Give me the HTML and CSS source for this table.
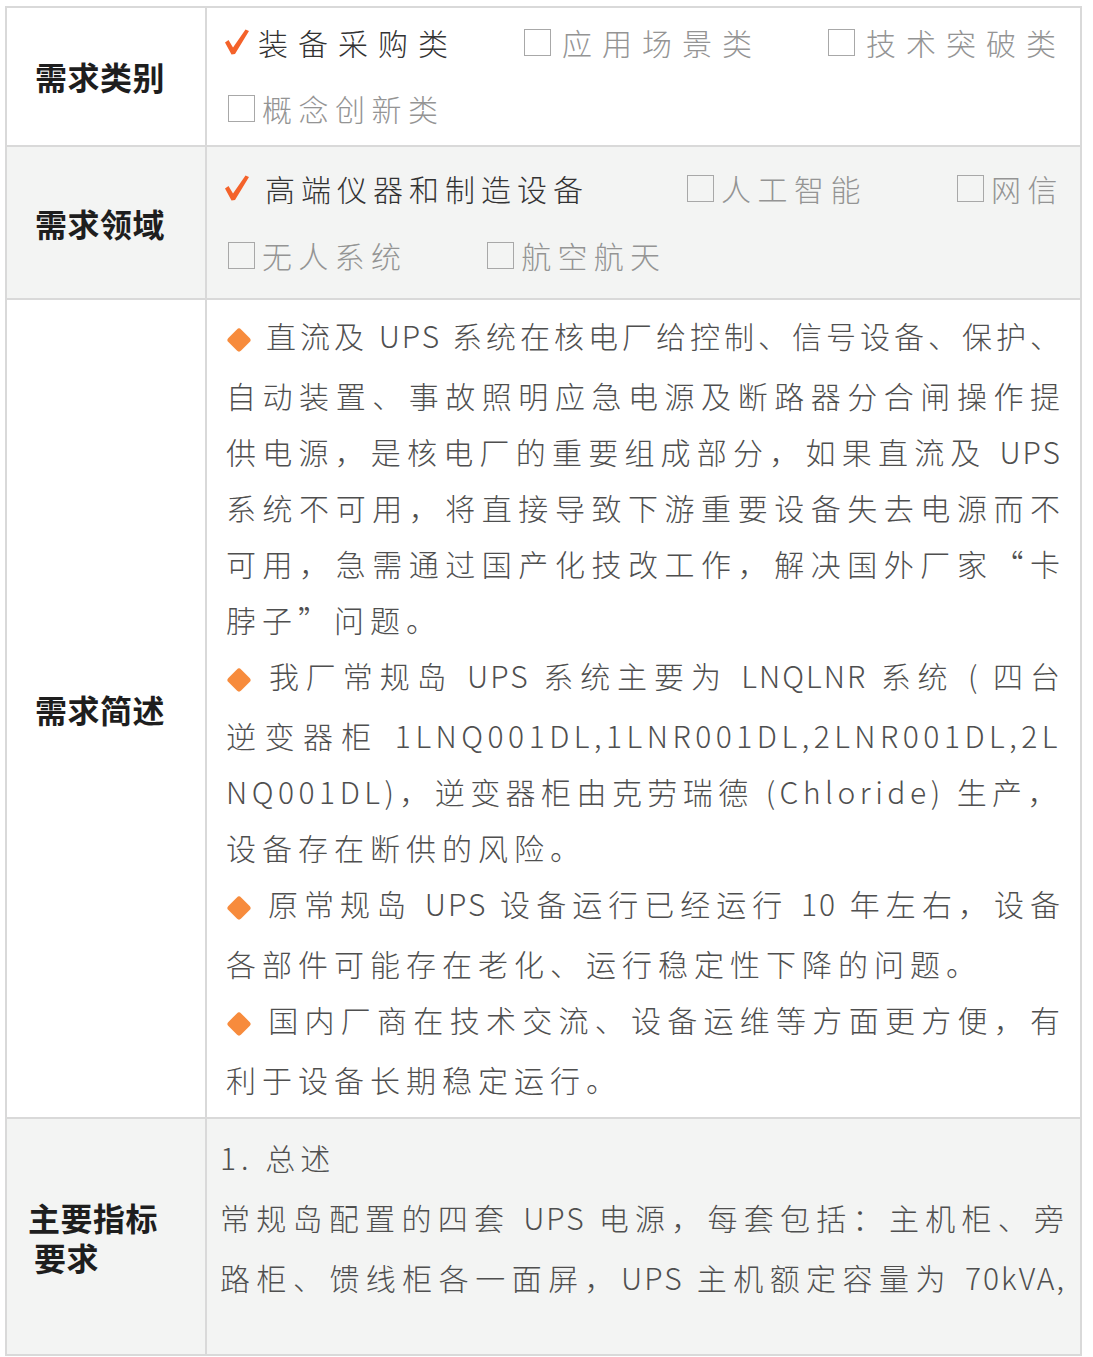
FILE: index.html
```html
<!doctype html>
<html lang="zh-CN">
    <head>
        <meta charset="UTF-8" />
        <meta name="viewport" content="width=device-width, initial-scale=1.0" />
        <title>需求信息</title>
        <link rel="stylesheet" href="styles.css">
    </head>
    <body>
        <table class="req">
            <colgroup>
                <col class="col-label" />
                <col />
            </colgroup>
            <tr>
                <th class="label-top">需求类别</th>
                <td class="opts opts-type">
                    <div class="line line-wide">
                        <span class="opt on">
                            <svg class="check" viewBox="0 0 24 26"><path d="M0 13.5 L3.5 11 L8 18.5 L20.5 0.5 L24 2 L10 25 L6.5 25.5 Z" /></svg>装备采购类
                        </span>
                        <span class="opt"><i class="box"></i>应用场景类</span>
                        <span class="opt"><i class="box"></i>技术突破类</span>
                    </div>
                    <div class="line">
                        <span class="opt"><i class="box"></i>概念创新类</span>
                    </div>
                </td>
            </tr>
            <tr class="shade">
                <th>需求领域</th>
                <td class="opts opts-field">
                    <div class="line line-a">
                        <span class="opt on">
                            <svg class="check" viewBox="0 0 24 26"><path d="M0 13.5 L3.5 11 L8 18.5 L20.5 0.5 L24 2 L10 25 L6.5 25.5 Z" /></svg>高端仪器和制造设备
                        </span>
                        <span class="opt"><i class="box"></i>人工智能</span>
                        <span class="opt"><i class="box"></i>网信</span>
                    </div>
                    <div class="line line-b">
                        <span class="opt"><i class="box"></i>无人系统</span>
                        <span class="opt"><i class="box"></i>航空航天</span>
                    </div>
                </td>
            </tr>
            <tr>
                <th>需求简述</th>
                <td class="text">
                    <p>
                        <span class="ln lead"><i class="dot"></i>直流及 UPS 系统在核电厂给控制、信号设备、保护、</span>
                        <span class="ln">自动装置、事故照明应急电源及断路器分合闸操作提</span>
                        <span class="ln">供电源，是核电厂的重要组成部分，如果直流及 UPS</span>
                        <span class="ln">系统不可用，将直接导致下游重要设备失去电源而不</span>
                        <span class="ln">可用，急需通过国产化技改工作，解决国外厂家“卡</span>
                        <span class="ln end">脖子”问题。</span>
                    </p>
                    <p>
                        <span class="ln lead"><i class="dot"></i>我厂常规岛 UPS 系统主要为 LNQLNR 系统 ( 四台</span>
                        <span class="ln code">逆变器柜 1LNQ001DL,1LNR001DL,2LNR001DL,2L</span>
                        <span class="ln code">NQ001DL)，逆变器柜由克劳瑞德 (Chloride) 生产，</span>
                        <span class="ln end">设备存在断供的风险。</span>
                    </p>
                    <p>
                        <span class="ln lead"><i class="dot"></i>原常规岛 UPS 设备运行已经运行 10 年左右，设备</span>
                        <span class="ln end">各部件可能存在老化、运行稳定性下降的问题。</span>
                    </p>
                    <p>
                        <span class="ln lead"><i class="dot"></i>国内厂商在技术交流、设备运维等方面更方便，有</span>
                        <span class="ln end">利于设备长期稳定运行。</span>
                    </p>
                </td>
            </tr>
            <tr class="shade">
                <th class="label-two">
                    <span class="lbl">主要指标</span>
                    <span class="lbl indent">要求</span>
                </th>
                <td class="text text-spec">
                    <p><span class="ln end">1. 总述</span></p>
                    <p>
                        <span class="ln">常规岛配置的四套 UPS 电源，每套包括：主机柜、旁</span>
                        <span class="ln">路柜、馈线柜各一面屏，UPS 主机额定容量为 70kVA,</span>
                    </p>
                </td>
            </tr>
        </table>
    </body>
</html>
```

FILE: styles.css
```css
body {
    margin: 0;
    padding: 6px 0 0 5px;
    background: #fff;
    font-family: "Noto Sans CJK SC", "Noto Sans", sans-serif;
}
.req {
    width: 1077px;
    table-layout: fixed;
    border-collapse: separate;
    border-spacing: 0;
    border-top: 2px solid #d9d9d9;
    border-left: 2px solid #d9d9d9;
}
.col-label {
    width: 200px;
}
.req th,
.req td {
    border-right: 2px solid #d9d9d9;
    border-bottom: 2px solid #d9d9d9;
    vertical-align: middle;
}
.shade th,
.shade td {
    background: #f3f4f3;
}
.req th {
    padding: 0 0 0 28px;
    text-align: left;
    font-size: 32px;
    font-weight: 700;
    line-height: 40px;
    letter-spacing: 0.5px;
    color: #1e1e1e;
}
.req th.label-top {
    padding-bottom: 2px;
}
.req th.label-two {
    padding-left: 21px;
}
.lbl {
    display: block;
}
.lbl.indent {
    padding-left: 6px;
}

/* option rows */
.opts {
    font-size: 30px;
    font-weight: 300;
    color: #949494;
}
.opts-type {
    padding: 1px 17px 4px 19px;
}
.opts-field {
    padding: 7px 17px 10px 19px;
}
.line {
    display: flex;
    align-items: center;
    height: 66px;
    white-space: nowrap;
}
.opts-field .line {
    height: 67px;
}
.opt {
    display: flex;
    align-items: center;
    letter-spacing: 6.5px;
}
.opt.on {
    color: #333;
}
.box {
    width: 27px;
    height: 27px;
    margin: 1px 7px 0 2px;
    border: 1.5px solid #a8a8a8;
    box-sizing: border-box;
}
.check {
    width: 24px;
    height: 26px;
    margin: 0 9px 0 -1px;
    fill: #f4622a;
}
.line-wide .opt {
    letter-spacing: 10px;
}
.line-wide .box {
    margin-right: 11px;
}
.line-wide .opt + .opt {
    margin-left: 64px;
}
.line-a .check {
    margin-right: 16px;
}
.line-a .opt.on {
    letter-spacing: 6px;
}
.line-a .opt:nth-child(2) {
    margin-left: 96px;
}
.line-a .opt:nth-child(3) {
    margin-left: 88px;
}
.line-b .opt {
    letter-spacing: 6.3px;
}
.line-b .opt + .opt {
    margin-left: 78px;
}

/* text rows */
.text {
    padding: 7px 18px 10px 19px;
    font-size: 30px;
    font-weight: 300;
    line-height: 56px;
    color: #4f4f4f;
}
.text p {
    margin: 0;
}
.ln {
    display: block;
    text-align: justify;
    text-align-last: justify;
    letter-spacing: 2px;
}
.ln.code {
    letter-spacing: 4.5px;
}
.ln.end {
    text-align-last: auto;
    letter-spacing: 6px;
}
.ln.lead {
    margin-bottom: 4px;
}
.dot {
    display: inline-block;
    width: 18px;
    height: 18px;
    margin: 0 16px 0 4px;
    border-radius: 3px;
    background: #f78b3c;
    transform: rotate(45deg);
    vertical-align: middle;
}
.text-spec {
    padding: 8px 14px 47px 13px;
    line-height: 60px;
}
.text-spec .ln {
    letter-spacing: 2px;
}
.text-spec .ln.end {
    letter-spacing: 5px;
}
```
